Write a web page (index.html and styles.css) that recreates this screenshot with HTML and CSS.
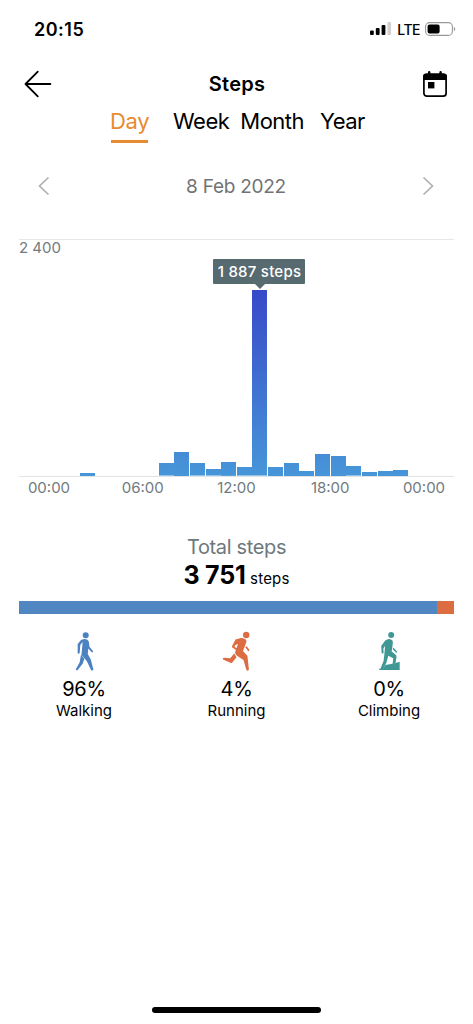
FILE: index.html
```html
<!DOCTYPE html>
<html lang="en">
<head>
    <meta charset="UTF-8">
    <title>Steps</title>
    <link rel="stylesheet" href="styles.css">
</head>

<body>
<div class="wrap">
    <div class="status">
        <span class="time">20:15</span>
        <div class="status-right">
            <svg class="signal" width="21" height="14" viewBox="0 0 21 14">
                <rect x="0" y="8.5" width="3.8" height="4.5" rx="1"/>
                <rect x="5.8" y="6" width="3.8" height="7" rx="1"/>
                <rect x="11.6" y="3" width="3.8" height="10" rx="1"/>
                <rect x="17.4" y="0" width="3.6" height="13" rx="1" fill="#d0d0d0"/>
            </svg>
            <span class="lte">LTE</span>
            <svg width="32" height="14" viewBox="0 0 32 14">
                <rect x=".6" y=".6" width="26.8" height="12.8" rx="4" fill="none" stroke="#999" stroke-width="1.1"/>
                <rect x="2.6" y="2.5" width="12" height="9" rx="2"/>
                <path d="M28.9 4.8c1.8.7 1.8 3.7 0 4.4z" fill="#999"/>
            </svg>
        </div>
    </div>

    <div class="header">
        <svg width="28" height="28" viewBox="0 0 28 28" fill="none" stroke="#000" stroke-width="1.8" stroke-linecap="round" stroke-linejoin="round">
            <path d="M26.4 14H1.5M13.8 1.6L1.5 14l12.3 12.4"/>
        </svg>
        <h1>Steps</h1>
        <svg width="26" height="27" viewBox="0 0 26 27">
            <rect x="1.9" y="3.4" width="22.2" height="21.8" rx="3" fill="none" stroke="#000" stroke-width="1.7"/>
            <path d="M1 9V5.500a3 3 0 0 1 3-3h2V1.200a1.200 1.200 0 0 1 2.400 0v1.300h9V1.200a1.200 1.200 0 0 1 2.400 0v1.300H22a3 3 0 0 1 3 3V9z"/>
            <rect x="6" y="11" width="6.4" height="6.4"/>
        </svg>
    </div>

    <ul class="tabs">
        <li class="active">Day</li>
        <li class="week">Week</li>
        <li class="month">Month</li>
        <li class="year">Year</li>
    </ul>

    <div class="date-row">
        <svg width="12" height="20" viewBox="0 0 12 20"><path d="M10.5 1.5L1.5 10l9 8.500"/></svg>
        <span>8 Feb 2022</span>
        <svg width="12" height="20" viewBox="0 0 12 20"><path d="M1.5 1.500l9 8.500-9 8.500"/></svg>
    </div>

    <!-- one column per hour -->
    <div class="chart">
        <span class="max">2 400</span>
        <div class="bars">
            <i></i>
            <i></i>
            <i style="height: 3px"></i>
            <i></i>
            <i></i>
            <i></i>
            <i></i>
            <i style="height: 12.6px"></i>
            <i style="height: 24.3px"></i>
            <i style="height: 12.6px"></i>
            <i style="height: 6.6px"></i>
            <i style="height: 13.9px"></i>
            <i style="height: 8.6px"></i>
            <i class="peak" style="height: 185.6px"><b class="tip">1 887 steps</b></i>
            <i style="height: 9.1px"></i>
            <i style="height: 13.2px"></i>
            <i style="height: 5px"></i>
            <i style="height: 22.1px"></i>
            <i style="height: 20.4px"></i>
            <i style="height: 9.6px"></i>
            <i style="height: 4.1px"></i>
            <i style="height: 5px"></i>
            <i style="height: 6.1px"></i>
            <i></i>
        </div>
    </div>
    <div class="hours">
        <span>00:00</span><span>06:00</span><span>12:00</span><span>18:00</span><span>00:00</span>
    </div>

    <div class="total">
        <p class="total-tit">Total steps</p>
        <p class="total-num"><b>3 751</b> <span>steps</span></p>
    </div>
    <div class="split">
        <span style="width: 96%"></span>
    </div>

    <ul class="types">
        <li>
            <svg class="walk" width="34" height="40" viewBox="0 0 34 40">
                <circle cx="18.7" cy="4.2" r="3"/>
                <path d="M14 9q3.500-1.500 6-.6 1.800.8 2 3l.4 4.400 3.600 4.200q.4 1.800-1.200 1.200l-3.600-3.600-.4 5.400 3 5.500 2.600 10q-.6 1.800-2.400.5l-4-8.500-5.500-6.700.7-8.300.5-4.500-2.400 3-.6 8q-1.200 1.500-2.100-.1l.1-9z"/>
                <path d="M14 23.500l3.300 4.300-1.500 4.800-5.300 6.600q-1.800.4-1.700-1l3.900-7z"/>
            </svg>
            <b>96%</b>
            <span>Walking</span>
        </li>
        <li>
            <svg class="run" width="34" height="40" viewBox="0 0 34 40">
                <circle cx="26.2" cy="4" r="3.2"/>
                <path d="M15.500 8.500l5.500-1.500q3-.2 4.700 1.500 1.100 1.200.5 3l-3.200 8.500 4.400 4.700 1.500 13.800q-.8 2-2.500.5L23.500 29l-6.500-4.200q-2.400-1.600-1.700-4l2.600-7.700-2.500 1-1 1.700 2.900 1.700q.5 1.600-1.300 1.500l-3.700-2.500q-.7-.6-.2-1.600z"/>
                <path d="M14.200 22.400l2.400 3.800-4.300 5.200q-.8.800-1.900.4L3 28.600q-.8-1.700.9-1.900l6.300.5z"/>
                <path d="M25.200 16.200l1.600-1 2.400 3.600q.5 1.800-1.100 1.300z"/>
            </svg>
            <b>4%</b>
            <span>Running</span>
        </li>
        <li>
            <svg class="climb" width="34" height="40" viewBox="0 0 34 40">
                <circle cx="19.2" cy="4" r="3"/>
                <path d="M13.200 9.600q3-2.200 5.800-1.200 1.900.8 1.900 2.800l-.9 7.600-.5 1.500 4.200 3.400q1 .8.800 2l-1 6.800-2.900.4.600-5.600-4.900-2.600-2 7.300-3.700 7H7.200v-1.300h1.200l3.200-7.700.9-8.200.6-7-1.700 2.700.2 4.500q-1.200 1.300-2-.3L9.200 15z"/>
                <path d="M27.700 30.800V39.100H10l3.500-5 8.300-1.500z"/>
                <path d="M21.300 16.400l3.700 4q.6 1.700-.9 1.100l-3.300-3z"/>
            </svg>
            <b>0%</b>
            <span>Climbing</span>
        </li>
    </ul>

    <div class="home-bar"></div>
</div>
</body>
</html>
```
FILE: styles.css
```css
* { margin: 0; padding: 0; box-sizing: border-box;}
body { background-color: #fff; color: #000; font-family: Inter, "Liberation Sans", sans-serif;}
li { list-style: none}
svg { display: block}
.wrap { width: 473px; height: 1024px; padding: 0 19px; overflow: hidden; display: flex; flex-direction: column;}

/*status bar*/
.status { height: 58px; padding: 0 0 0 15px; display: flex; justify-content: space-between; align-items: center; flex: none;}
.time { font-size: 18px; font-weight: 600; letter-spacing: .5px;}
.status-right { display: flex; align-items: center; margin-right: -3px;}
.lte { font-size: 14px; font-weight: 500; margin: 0 5px 0 6px; letter-spacing: -.5px;}

/*title*/
.header { height: 52px; padding: 0 6px 0 5px; display: flex; justify-content: space-between; align-items: center; flex: none;}
.header h1 { font-size: 20px; font-weight: 600; letter-spacing: .3px; line-height: 24px; margin: -1px 0 0;}
.tabs { height: 33px; padding-left: 92px; display: flex; flex: none; font-size: 22px; line-height: 23px; letter-spacing: -.3px;}
.tabs li { height: 33px; white-space: nowrap;}
.tabs .active { width: 37px; color: #e78b32; border-bottom: 3px solid #e78b32; text-indent: -1px;}
.tabs .week { margin-left: 25px; letter-spacing: -.5px;}
.tabs .month { margin-left: 11px; letter-spacing: -.5px;}
.tabs .year { margin-left: 16px; letter-spacing: -.6px;}
.date-row { height: 86px; padding: 0 20px 0 19px; display: flex; justify-content: space-between; align-items: center; flex: none; color: #717374; font-size: 19px; letter-spacing: -.25px;}
.date-row svg { fill: none; stroke: #aeb0b1; stroke-width: 1.7;}

/*chart*/
.chart { height: 238px; margin-top: 10px; border-top: 1px solid #e4e6e7; border-bottom: 1px solid #dfe4e6; display: flex; flex-direction: column; justify-content: space-between; flex: none; color: #717b80; font-size: 15px;}
.max { line-height: 16px; height: 16px;}
.bars { height: 186px; margin: 0 30px; display: grid; grid-template-columns: repeat(24, 1fr); column-gap: .7px; align-items: end;}
.bars i { background: linear-gradient(#3749c8, #4796d9) bottom / 100% 186px no-repeat; font-style: normal;}
.peak { position: relative;}
.tip { position: absolute; left: 50%; bottom: 192px; width: 92px; height: 25px; margin-left: -46.5px; background-color: #576a70; color: #fff; font-size: 15px; font-weight: 500; letter-spacing: .25px; line-height: 25px; text-align: center; white-space: nowrap; border-radius: 1px;}
.tip:after { content: ""; position: absolute; left: 42px; top: 25px; border: 5px solid transparent; border-top-color: #576a70; border-bottom: 0;}
.hours { height: 22px; padding: 0 8px; display: flex; justify-content: space-between; flex: none; color: #717b80; font-size: 15px; line-height: 22px;}
.hours span { width: 44px; text-align: center;}

/*totals*/
.total { height: 102px; padding-top: 35px; text-align: center; flex: none;}
.total-tit { color: #6d787c; font-size: 20px; line-height: 26px; letter-spacing: -.35px;}
.total-num { line-height: 30px;}
.total-num b { font-size: 25px; letter-spacing: -.2px;}
.total-num span { font-size: 15px; letter-spacing: .2px;}
.split { height: 13px; background-color: #dc6d43; flex: none;}
.split span { display: block; height: 13px; background-color: #5086c2;}
.types { padding: 17px 0 0; display: flex; justify-content: space-between;}
.types li { width: 130px; display: flex; flex-direction: column; align-items: center;}
.types b { font-size: 20px; font-weight: 400; line-height: 24px; margin-top: 6px; letter-spacing: -.3px;}
.types span { font-size: 15px; line-height: 20px;}
.walk { fill: #4c82c2;}
.run { fill: #dc6d43;}
.climb { fill: #409894;}

.home-bar { width: 169px; height: 6px; margin: auto auto 11px; border-radius: 3px; background-color: #000; flex: none;}
```
